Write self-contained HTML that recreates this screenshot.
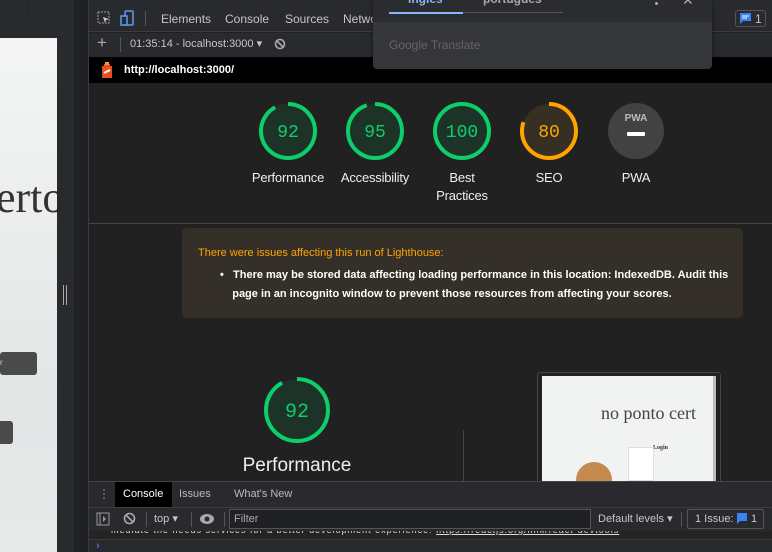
<!DOCTYPE html>
<html><head><meta charset="utf-8"><style>
*{margin:0;padding:0;box-sizing:border-box}
body{width:772px;height:552px;overflow:hidden;background:#202124;font-family:"Liberation Sans",sans-serif;position:relative;color:#ddd}
.a{position:absolute}
.t{font-size:12px;color:#c6c6c6}
.lbl{font-size:13px;color:#eee;text-align:center;width:100px;line-height:18px;letter-spacing:-0.2px}
</style></head><body>
<!-- left page -->
<div class="a" style="left:0;top:0;width:57px;height:552px;background:#292a2d"></div>
<div class="a" style="left:0;top:38px;width:57px;height:514px;background:linear-gradient(#f4f5f5,#e3e6e6 70%,#e8eaea)"></div>
<div class="a" style="left:28px;top:0;width:1px;height:18px;background:#202124"></div>
<div class="a" style="left:-4px;top:172px;font-family:'Liberation Serif',serif;font-size:44px;color:#333">erto</div>
<div class="a" style="left:0;top:352px;width:37px;height:23px;background:#4a4a4a;border-radius:3px;color:#ccc;font-size:8px;padding:6px 0 0 0">r</div>
<div class="a" style="left:0;top:421px;width:13px;height:23px;background:#4a4a4a;border-radius:0 3px 3px 0"></div>
<div class="a" style="left:57px;top:0;width:17px;height:552px;background:#292a2d"></div>
<div class="a" style="left:74px;top:0;width:14px;height:552px;background:#202124"></div>
<div class="a" style="left:88px;top:0;width:1px;height:552px;background:#3c3c3c"></div>
<div class="a" style="left:63px;top:285px;width:1px;height:20px;background:#aaa"></div>
<div class="a" style="left:66px;top:285px;width:1px;height:20px;background:#aaa"></div>
<!-- top tab bar -->
<div class="a" style="left:89px;top:0;width:683px;height:32px;background:#292a2d;border-bottom:1px solid #3c3c3c"></div>
<svg class="a" style="left:97px;top:11px" width="14" height="14"><rect x="1" y="1" width="11" height="11" fill="none" stroke="#999" stroke-dasharray="2 1"/><path d="M6 6l6 2-3 1-1 3z" fill="#ccc"/></svg>
<svg class="a" style="left:120px;top:10px" width="14" height="16"><rect x="5" y="1" width="8" height="14" rx="1" fill="none" stroke="#5a9cf5" stroke-width="1.5"/><rect x="1" y="6" width="6" height="9" fill="#292a2d" stroke="#5a9cf5" stroke-width="1.5"/></svg>
<div class="a" style="left:145px;top:11px;width:1px;height:15px;background:#555"></div>
<div class="a t" style="left:161px;top:12px">Elements</div>
<div class="a t" style="left:225px;top:12px">Console</div>
<div class="a t" style="left:285px;top:12px">Sources</div>
<div class="a t" style="left:343px;top:12px">Netwo</div>
<div class="a" style="left:735px;top:10px;width:31px;height:17px;border:1px solid #555;border-radius:3px"></div>
<svg class="a" style="left:740px;top:13px" width="11" height="11"><path d="M0 0h11v8H3L0 11z" fill="#3b82f6"/><path d="M2 3h7M2 5h5" stroke="#fff"/></svg>
<div class="a t" style="left:755px;top:12px">1</div>
<!-- second toolbar -->
<div class="a" style="left:89px;top:33px;width:683px;height:24px;background:#292a2d"></div>
<div class="a" style="left:97px;top:33px;font-size:17px;color:#aaa">+</div>
<div class="a" style="left:120px;top:37px;width:1px;height:15px;background:#555"></div>
<div class="a t" style="left:130px;top:37px;font-size:11px">01:35:14 - localhost:3000 ▾</div>
<svg class="a" style="left:274px;top:38px" width="12" height="12"><circle cx="6" cy="6" r="4.5" fill="none" stroke="#aaa" stroke-width="1.6"/><path d="M3 3l6 6" stroke="#aaa" stroke-width="1.6"/></svg>
<!-- report header -->
<div class="a" style="left:89px;top:57px;width:683px;height:26px;background:#000"></div>
<svg class="a" style="left:100px;top:61px" width="14" height="18"><path d="M4 3h6v2h2v12H2V5h2z" fill="#e8501f"/><rect x="5" y="1" width="4" height="3" fill="#f4a21a"/><path d="M4 12l6-3" stroke="#fff" stroke-width="2"/></svg>
<div class="a" style="left:124px;top:64px;font-size:11px;font-weight:bold;color:#fff">http://localhost:3000/</div>
<!-- report body -->
<div class="a" style="left:89px;top:83px;width:683px;height:398px;background:#212121"></div>
<div class="a" style="left:89px;top:223px;width:683px;height:1px;background:#444"></div>
<svg class="a" style="left:89px;top:83px" width="683" height="398">
<g fill="#1e3327"><circle cx="199" cy="48" r="27"/><circle cx="286" cy="48" r="27"/><circle cx="373" cy="48" r="27"/></g>
<circle cx="460" cy="48" r="27" fill="#352f24"/>
<circle cx="547" cy="48" r="28" fill="#424242"/>
<g fill="none" stroke-width="4" transform="rotate(-90)">
<circle cx="-48" cy="199" r="27" stroke="#0cce6b" stroke-dasharray="156 170"/>
<circle cx="-48" cy="286" r="27" stroke="#0cce6b" stroke-dasharray="161 170"/>
<circle cx="-48" cy="373" r="27" stroke="#0cce6b" stroke-dasharray="170 170"/>
<circle cx="-48" cy="460" r="27" stroke="#ffa400" stroke-dasharray="136 170"/>
</g>
<g font-family="Liberation Mono,monospace" font-size="18" text-anchor="middle">
<text x="199" y="54" fill="#0cce6b">92</text><text x="286" y="54" fill="#0cce6b">95</text><text x="373" y="54" fill="#0cce6b">100</text><text x="460" y="54" fill="#ffa400">80</text>
</g>
<text x="547" y="38" font-size="10" font-weight="bold" fill="#bbb" text-anchor="middle" font-family="Liberation Sans">PWA</text>
<rect x="538" y="49" width="18" height="4" rx="1" fill="#fff"/>
<circle cx="208" cy="327" r="31" fill="#1e3327"/>
<circle cx="208" cy="327" r="31" fill="none" stroke="#0cce6b" stroke-width="4" stroke-dasharray="179 195" transform="rotate(-90 208 327)"/>
<text x="208" y="334" font-family="Liberation Mono,monospace" font-size="20" fill="#0cce6b" text-anchor="middle">92</text>
</svg>
<div class="a lbl" style="left:238px;top:169px">Performance</div>
<div class="a lbl" style="left:325px;top:169px">Accessibility</div>
<div class="a lbl" style="left:412px;top:169px">Best<br>Practices</div>
<div class="a lbl" style="left:499px;top:169px">SEO</div>
<div class="a lbl" style="left:586px;top:169px">PWA</div>
<div class="a" style="left:182px;top:228px;width:561px;height:90px;background:#342f29;border-radius:5px"></div>
<div class="a" style="left:198px;top:247px;font-size:11px;color:#ffa400">There were issues affecting this run of Lighthouse:</div>
<div class="a" style="left:220px;top:266px;font-size:11px;color:#fff;font-weight:bold;line-height:19px;width:520px">• &nbsp;&nbsp;There may be stored data affecting loading performance in this location: IndexedDB. Audit this<br>&nbsp;&nbsp;&nbsp;&nbsp;page in an incognito window to prevent those resources from affecting your scores.</div>
<div class="a" style="left:197px;top:455px;width:200px;text-align:center;font-size:19px;color:#eee">Performance</div>
<div class="a" style="left:463px;top:430px;width:1px;height:51px;background:#444"></div>
<div class="a" style="left:537px;top:372px;width:184px;height:112px;border:1px solid #444;border-radius:3px"></div>
<div class="a" style="left:542px;top:376px;width:174px;height:105px;background:#f1f3f3;overflow:hidden">
<div class="a" style="left:59px;top:27px;font-family:'Liberation Serif',serif;font-size:18px;color:#444;white-space:nowrap">no ponto cert</div>
<div class="a" style="left:111px;top:69px;font-family:'Liberation Serif',serif;font-size:6px;font-weight:bold;color:#333">Login</div>
<div class="a" style="left:86px;top:71px;width:26px;height:34px;background:#fff;border:1px solid #ddd"></div>
<div class="a" style="left:34px;top:86px;width:36px;height:22px;background:#c48a4e;border-radius:18px 18px 4px 4px"></div>
<div class="a" style="left:171px;top:0;width:3px;height:105px;background:#bbb"></div>
</div>
<!-- console drawer -->
<div class="a" style="left:89px;top:481px;width:683px;height:71px;background:#292a2d;border-top:1px solid #444"></div>
<div class="a" style="left:102px;top:487px;font-size:12px;color:#aaa;line-height:4px">·<br>·<br>·</div>
<div class="a" style="left:115px;top:482px;width:57px;height:25px;background:#000"></div>
<div class="a" style="left:123px;top:488px;font-size:11px;color:#fff">Console</div>
<div class="a" style="left:179px;top:488px;font-size:11px;color:#bbb">Issues</div>
<div class="a" style="left:234px;top:488px;font-size:11px;color:#bbb">What's New</div>
<div class="a" style="left:89px;top:507px;width:683px;height:1px;background:#3c3c3c"></div>
<svg class="a" style="left:96px;top:512px" width="14" height="14"><rect x="1" y="1" width="12" height="12" fill="none" stroke="#999"/><path d="M4 1v12" stroke="#999"/><path d="M7 4l3 3-3 3z" fill="#999"/></svg>
<svg class="a" style="left:123px;top:512px" width="13" height="13"><circle cx="6.5" cy="6.5" r="5" fill="none" stroke="#aaa" stroke-width="1.6"/><path d="M3 3l7 7" stroke="#aaa" stroke-width="1.6"/></svg>
<div class="a" style="left:146px;top:512px;width:1px;height:15px;background:#555"></div>
<div class="a t" style="left:154px;top:512px;font-size:11px">top ▾</div>
<div class="a" style="left:191px;top:512px;width:1px;height:15px;background:#555"></div>
<svg class="a" style="left:199px;top:512px" width="16" height="14"><ellipse cx="8" cy="7" rx="7" ry="5" fill="#aaa"/><circle cx="8" cy="7" r="2.5" fill="#292a2d"/></svg>
<div class="a" style="left:224px;top:512px;width:1px;height:15px;background:#555"></div>
<div class="a" style="left:229px;top:509px;width:362px;height:20px;background:#202124;border:1px solid #555"></div>
<div class="a" style="left:234px;top:513px;font-size:11px;color:#aaa">Filter</div>
<div class="a t" style="left:598px;top:512px;font-size:11px">Default levels ▾</div>
<div class="a" style="left:681px;top:512px;width:1px;height:15px;background:#555"></div>
<div class="a" style="left:687px;top:509px;width:77px;height:20px;border:1px solid #555;border-radius:2px"></div>
<div class="a t" style="left:695px;top:513px;font-size:11px">1 Issue: </div>
<svg class="a" style="left:737px;top:513px" width="10" height="11"><path d="M0 0h10v8H3L0 11z" fill="#3b82f6"/></svg>
<div class="a t" style="left:751px;top:513px;font-size:11px">1</div>
<div class="a" style="left:89px;top:531px;width:683px;height:8px;background:#242424;overflow:hidden"><div style="position:absolute;left:22px;top:-6px;font-size:9px;color:#ddd;white-space:nowrap;letter-spacing:1px">mediate the needs services for a better development experience: <u>https://reactjs.org/link/react-devtools</u></div></div>
<div class="a" style="left:89px;top:539px;width:683px;height:1px;background:#3c3c3c"></div>
<div class="a" style="left:96px;top:540px;font-size:11px;color:#4b8ef5">›</div>
<!-- translate popup -->
<div class="a" style="left:373px;top:0;width:339px;height:69px;background:#35363a;border-radius:0 0 4px 4px;box-shadow:0 2px 6px rgba(0,0,0,.5)"></div>
<div class="a" style="left:373px;top:0;width:339px;height:22px;background:#2b2c30"></div>
<div class="a" style="left:408px;top:-8px;font-size:12px;font-weight:bold;color:#8ab4f8">Inglês</div>
<div class="a" style="left:483px;top:-8px;font-size:12px;font-weight:bold;color:#aaa">português</div>
<div class="a" style="left:389px;top:12px;width:174px;height:1px;background:#555"></div>
<div class="a" style="left:389px;top:12px;width:74px;height:2px;background:#8ab4f8"></div>
<div class="a" style="left:655px;top:2px;width:3px;height:3px;background:#aaa;border-radius:2px"></div>
<div class="a" style="left:682px;top:-8px;font-size:14px;color:#aaa">✕</div>
<div class="a" style="left:389px;top:38px;font-size:12px;color:#666">Google Translate</div>
</body></html>
